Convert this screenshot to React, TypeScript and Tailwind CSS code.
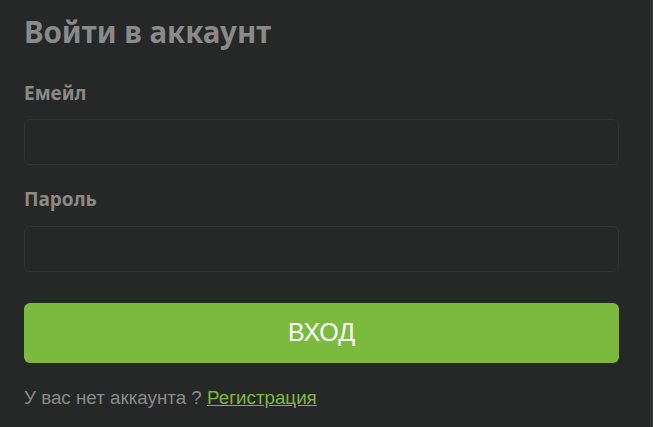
export default function App() {
  return (
    <div className="flex h-[427px] w-full bg-[#262727]">
      <div className="flex-1 pl-6 pr-[31px] pt-3">
        <h1 className="font-['Noto_Sans',sans-serif] text-[29.5px] font-bold leading-[40px] text-[#8a8a8a]">
          Войти в аккаунт
        </h1>
        <form className="mt-[29px] flex flex-col" onSubmit={(e) => e.preventDefault()}>
          <label className="font-['Noto_Sans',sans-serif] text-[19px] font-bold leading-6 text-[#8c8a87]">
            Емейл
          </label>
          <input
            type="email"
            className="mt-[14px] h-[46px] w-full rounded-md border border-[#323434] bg-[#252727] outline-none"
          />
          <label className="mt-[22px] font-['Noto_Sans',sans-serif] text-[19px] font-bold leading-6 text-[#8c8a87]">
            Пароль
          </label>
          <input
            type="password"
            className="mt-[15px] h-[46px] w-full rounded-md border border-[#323434] bg-[#252727] outline-none"
          />
          <button
            type="submit"
            className="mt-[31px] h-[60px] w-full rounded-md bg-[#7cb93f] font-['Liberation_Sans',sans-serif] text-[25px] text-white"
          >
            ВХОД
          </button>
          <p className="mt-[23px] font-['Liberation_Sans',sans-serif] text-[18.8px] leading-6 text-[#8a8a8a]">
            У вас нет аккаунта ?{" "}
            <a href="#" className="text-[#7cb93f] underline">
              Регистрация
            </a>
          </p>
        </form>
      </div>
      <div className="w-[3px] border-x border-[#3a3b3b]" />
    </div>
  );
}
